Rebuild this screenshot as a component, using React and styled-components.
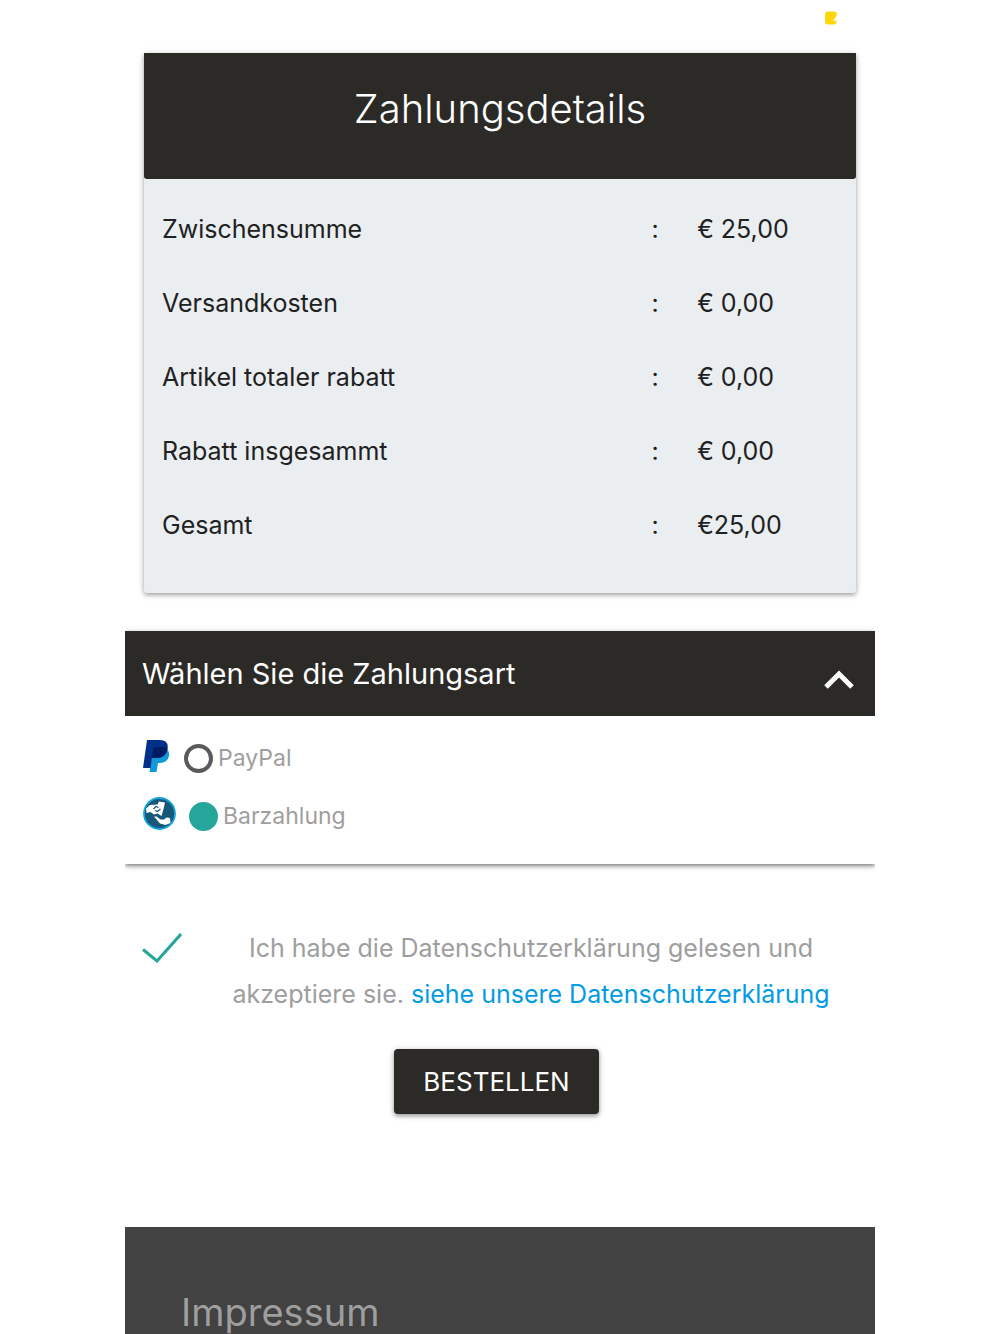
import React, { useState } from "react";
import styled, { createGlobalStyle } from "styled-components";

const GlobalStyle = createGlobalStyle`
    *{
        box-sizing:border-box;
    }
    body{
        margin:0;
        background-color:#fff;
        font-family:Inter, "Liberation Sans", sans-serif;
        font-size:25px;
        color:#212121;
    }
`

const Page = styled.div`
    width:75%;
    margin:0 auto;
`

const TopBar = styled.div`
    display:flex;
    justify-content:flex-end;
    height:53px;
    padding:11px 38px 0 0;
`

const Card = styled.section`
    margin:0 19px 38px;
    padding-bottom:31px;
    background-color:#eaeef1;
    border-radius:3px;
    box-shadow:0 2px 4px rgba(0,0,0,0.3), 0 1px 9px rgba(0,0,0,0.12);
`

const CardTitle = styled.h1`
    margin:0 0 13px;
    padding:32px 18px 46px;
    background-color:#2b2a26;
    border-radius:0 0 3px 3px;
    color:#fff;
    font-size:40px;
    font-weight:300;
    line-height:48px;
    text-align:center;
`

const Summary = styled.table`
    width:100%;
    table-layout:fixed;
    border-collapse:collapse;
`

const Row = styled.tr`
    height:74px;
`

const Label = styled.th`
    width:68%;
    padding:0 0 0 18px;
    font-weight:400;
    text-align:left;
`

const Colon = styled.td`
    width:54px;
    padding:0;
    text-align:center;
`

const Value = styled.td`
    padding:0 0 0 15px;
`

const Panel = styled.section`
    box-shadow:0 2px 4px rgba(0,0,0,0.45), 0 1px 9px rgba(0,0,0,0.1);
    clip-path:inset(-8px 0 -12px 0);
`

const PanelHeader = styled.button`
    display:flex;
    justify-content:space-between;
    align-items:center;
    width:100%;
    height:85px;
    padding:0 21px 0 17px;
    border:0;
    background-color:#2b2a26;
    color:#fff;
    font-family:inherit;
    font-size:29px;
    text-align:left;
    cursor:pointer;
    svg{
        margin-top:12px;
    }
`

const Methods = styled.div`
    padding:13px 18px 19px;
    background-color:#fff;
`

const Method = styled.label`
    display:flex;
    align-items:center;
    height:58px;
    color:#9e9e9e;
    font-size:23px;
    svg{
        margin:0 13px 5px 0;
    }
`

const Radio = styled.input`
    appearance:none;
    width:29px;
    height:29px;
    margin:0 5px 0 0;
    border:4px solid #5a5a5a;
    border-radius:50%;
    &:checked{
        border-color:#26a69a;
        background-color:#26a69a;
    }
`

const Consent = styled.div`
    display:flex;
    align-items:flex-start;
    gap:22px;
    margin-top:61px;
    padding:0 17px;
    color:#9e9e9e;
    line-height:46px;
    text-align:center;
`

const CheckBox = styled.span`
    display:grid;
    flex:none;
    width:40px;
    height:46px;
    align-items:center;
    input, svg{
        grid-area:1 / 1;
    }
    input{
        appearance:none;
        width:40px;
        height:40px;
        margin:0;
    }
    svg{
        pointer-events:none;
        visibility:${props => props.$checked ? "visible" : "hidden"};
    }
`

const ConsentText = styled.div`
    flex:1;
`

const PolicyLink = styled.a`
    color:#039be5;
    text-decoration:none;
`

const Actions = styled.div`
    display:flex;
    justify-content:center;
    padding:32px 7px 113px 0;
`

const OrderButton = styled.button`
    height:65px;
    padding:0 29px;
    border:0;
    border-radius:4px;
    background-color:#2b2a26;
    box-shadow:0 2px 4px rgba(0,0,0,0.35), 0 1px 9px rgba(0,0,0,0.12);
    color:#fff;
    font-family:inherit;
    font-size:26px;
    text-transform:uppercase;
    cursor:pointer;
`

const Footer = styled.footer`
    padding:63px 56px 0;
    background-color:#424242;
`

const FooterTitle = styled.h2`
    margin:0;
    color:#9e9e9e;
    font-size:38px;
    font-weight:400;
    line-height:44px;
`

const Flag = () => (
    <svg width="12" height="14" viewBox="0 0 12 14" aria-hidden="true">
        <path d="M3 .5H9Q12 .5 11.800 3.500Q11.600 5.500 8 9.500L11.500 9.800Q12 13.500 9 13.500H3Q0 13.500 0 10.500V3.500Q0 .5 3 .5Z" fill="#ffd60a" />
    </svg>
)

const PayPalIcon = () => (
    <svg width="28" height="32" viewBox="0 0 28 32" aria-hidden="true">
        <path d="M10 9H24Q27 12 26 16Q24.500 23 17 23H15L13.500 32H6.500Z" fill="#139ad6" />
        <path d="M4 0H17Q26 0 24.500 9Q23 18 13 18H9L7.500 28H0Z" fill="#003087" />
        <path d="M10.500 8.500Q10.700 7 12.500 7H21Q23 7 24.500 8.500Q23 18 13 18H9Z" fill="#001c64" />
    </svg>
)

const CashIcon = () => (
    <svg width="33" height="33" viewBox="0 0 33 33" aria-hidden="true">
        <circle cx="16.500" cy="16.500" r="15.500" fill="#175778" stroke="#12a4dc" strokeWidth="1.800" />
        <path d="M3 11.500L7 8L14.500 7.500L16 4.500L22 5.500L20.500 12L18.500 19L14.500 16.500L11 17.500L7.500 15L3.500 16Z" fill="#fff" />
        <path d="M10.500 12L13 9.500L15.500 10.500M12 13.500L14.500 14.500L17.500 12" fill="none" stroke="#175778" strokeWidth="1.200" />
        <path d="M11 19.500L13.500 19.500L17.500 22.500L21 22.500L23.500 20.500L27 21L27.500 26L22.500 28L17 26.500Z" fill="#fff" />
    </svg>
)

const rows = [
    { label: "Zwischensumme", value: "€ 25,00" },
    { label: "Versandkosten", value: "€ 0,00" },
    { label: "Artikel totaler rabatt", value: "€ 0,00" },
    { label: "Rabatt insgesammt", value: "€ 0,00" },
    { label: "Gesamt", value: "€25,00" },
]

const methods = [
    { id: "paypal", name: "PayPal", Icon: PayPalIcon },
    { id: "cash", name: "Barzahlung", Icon: CashIcon },
]

const App = () => {
    const [open, setOpen] = useState(true)
    const [method, setMethod] = useState("cash")
    const [accepted, setAccepted] = useState(true)

    return(
        <>
            <GlobalStyle />
            <Page>
                <TopBar><Flag /></TopBar>
                <Card>
                    <CardTitle>Zahlungsdetails</CardTitle>
                    <Summary>
                        <tbody>
                            {rows.map((row) => (
                                <Row key={row.label}>
                                    <Label scope="row">{row.label}</Label>
                                    <Colon>:</Colon>
                                    <Value>{row.value}</Value>
                                </Row>
                            ))}
                        </tbody>
                    </Summary>
                </Card>

                <Panel>
                    <PanelHeader type="button" aria-expanded={open} onClick={() => setOpen(!open)}>
                        Wählen Sie die Zahlungsart
                        <svg width="30" height="20" viewBox="0 0 30 20" aria-hidden="true">
                            <path d="M2 17L15 4L28 17" fill="none" stroke="#fff" strokeWidth="5" />
                        </svg>
                    </PanelHeader>
                    {open && (
                        <Methods>
                            {methods.map(({ id, name, Icon }) => (
                                <Method key={id} htmlFor={id}>
                                    <Icon />
                                    <Radio
                                        type="radio"
                                        id={id}
                                        name="method"
                                        checked={method === id}
                                        onChange={() => setMethod(id)}
                                    />
                                    {name}
                                </Method>
                            ))}
                        </Methods>
                    )}
                </Panel>

                <Consent>
                    <CheckBox $checked={accepted}>
                        <input
                            type="checkbox"
                            id="accept"
                            checked={accepted}
                            onChange={() => setAccepted(!accepted)}
                        />
                        <svg width="40" height="30" viewBox="0 0 40 30" aria-hidden="true">
                            <path d="M1 16.500L15 28L39 1" fill="none" stroke="#26a69a" strokeWidth="3" />
                        </svg>
                    </CheckBox>
                    <ConsentText>
                        <label htmlFor="accept">Ich habe die Datenschutzerklärung gelesen und akzeptiere sie.</label>{" "}
                        <PolicyLink href="#datenschutz">siehe unsere Datenschutzerklärung</PolicyLink>
                    </ConsentText>
                </Consent>
                <Actions>
                    <OrderButton type="button">Bestellen</OrderButton>
                </Actions>

                <Footer>
                    <FooterTitle>Impressum</FooterTitle>
                </Footer>
            </Page>
        </>
    )
};

export default App
